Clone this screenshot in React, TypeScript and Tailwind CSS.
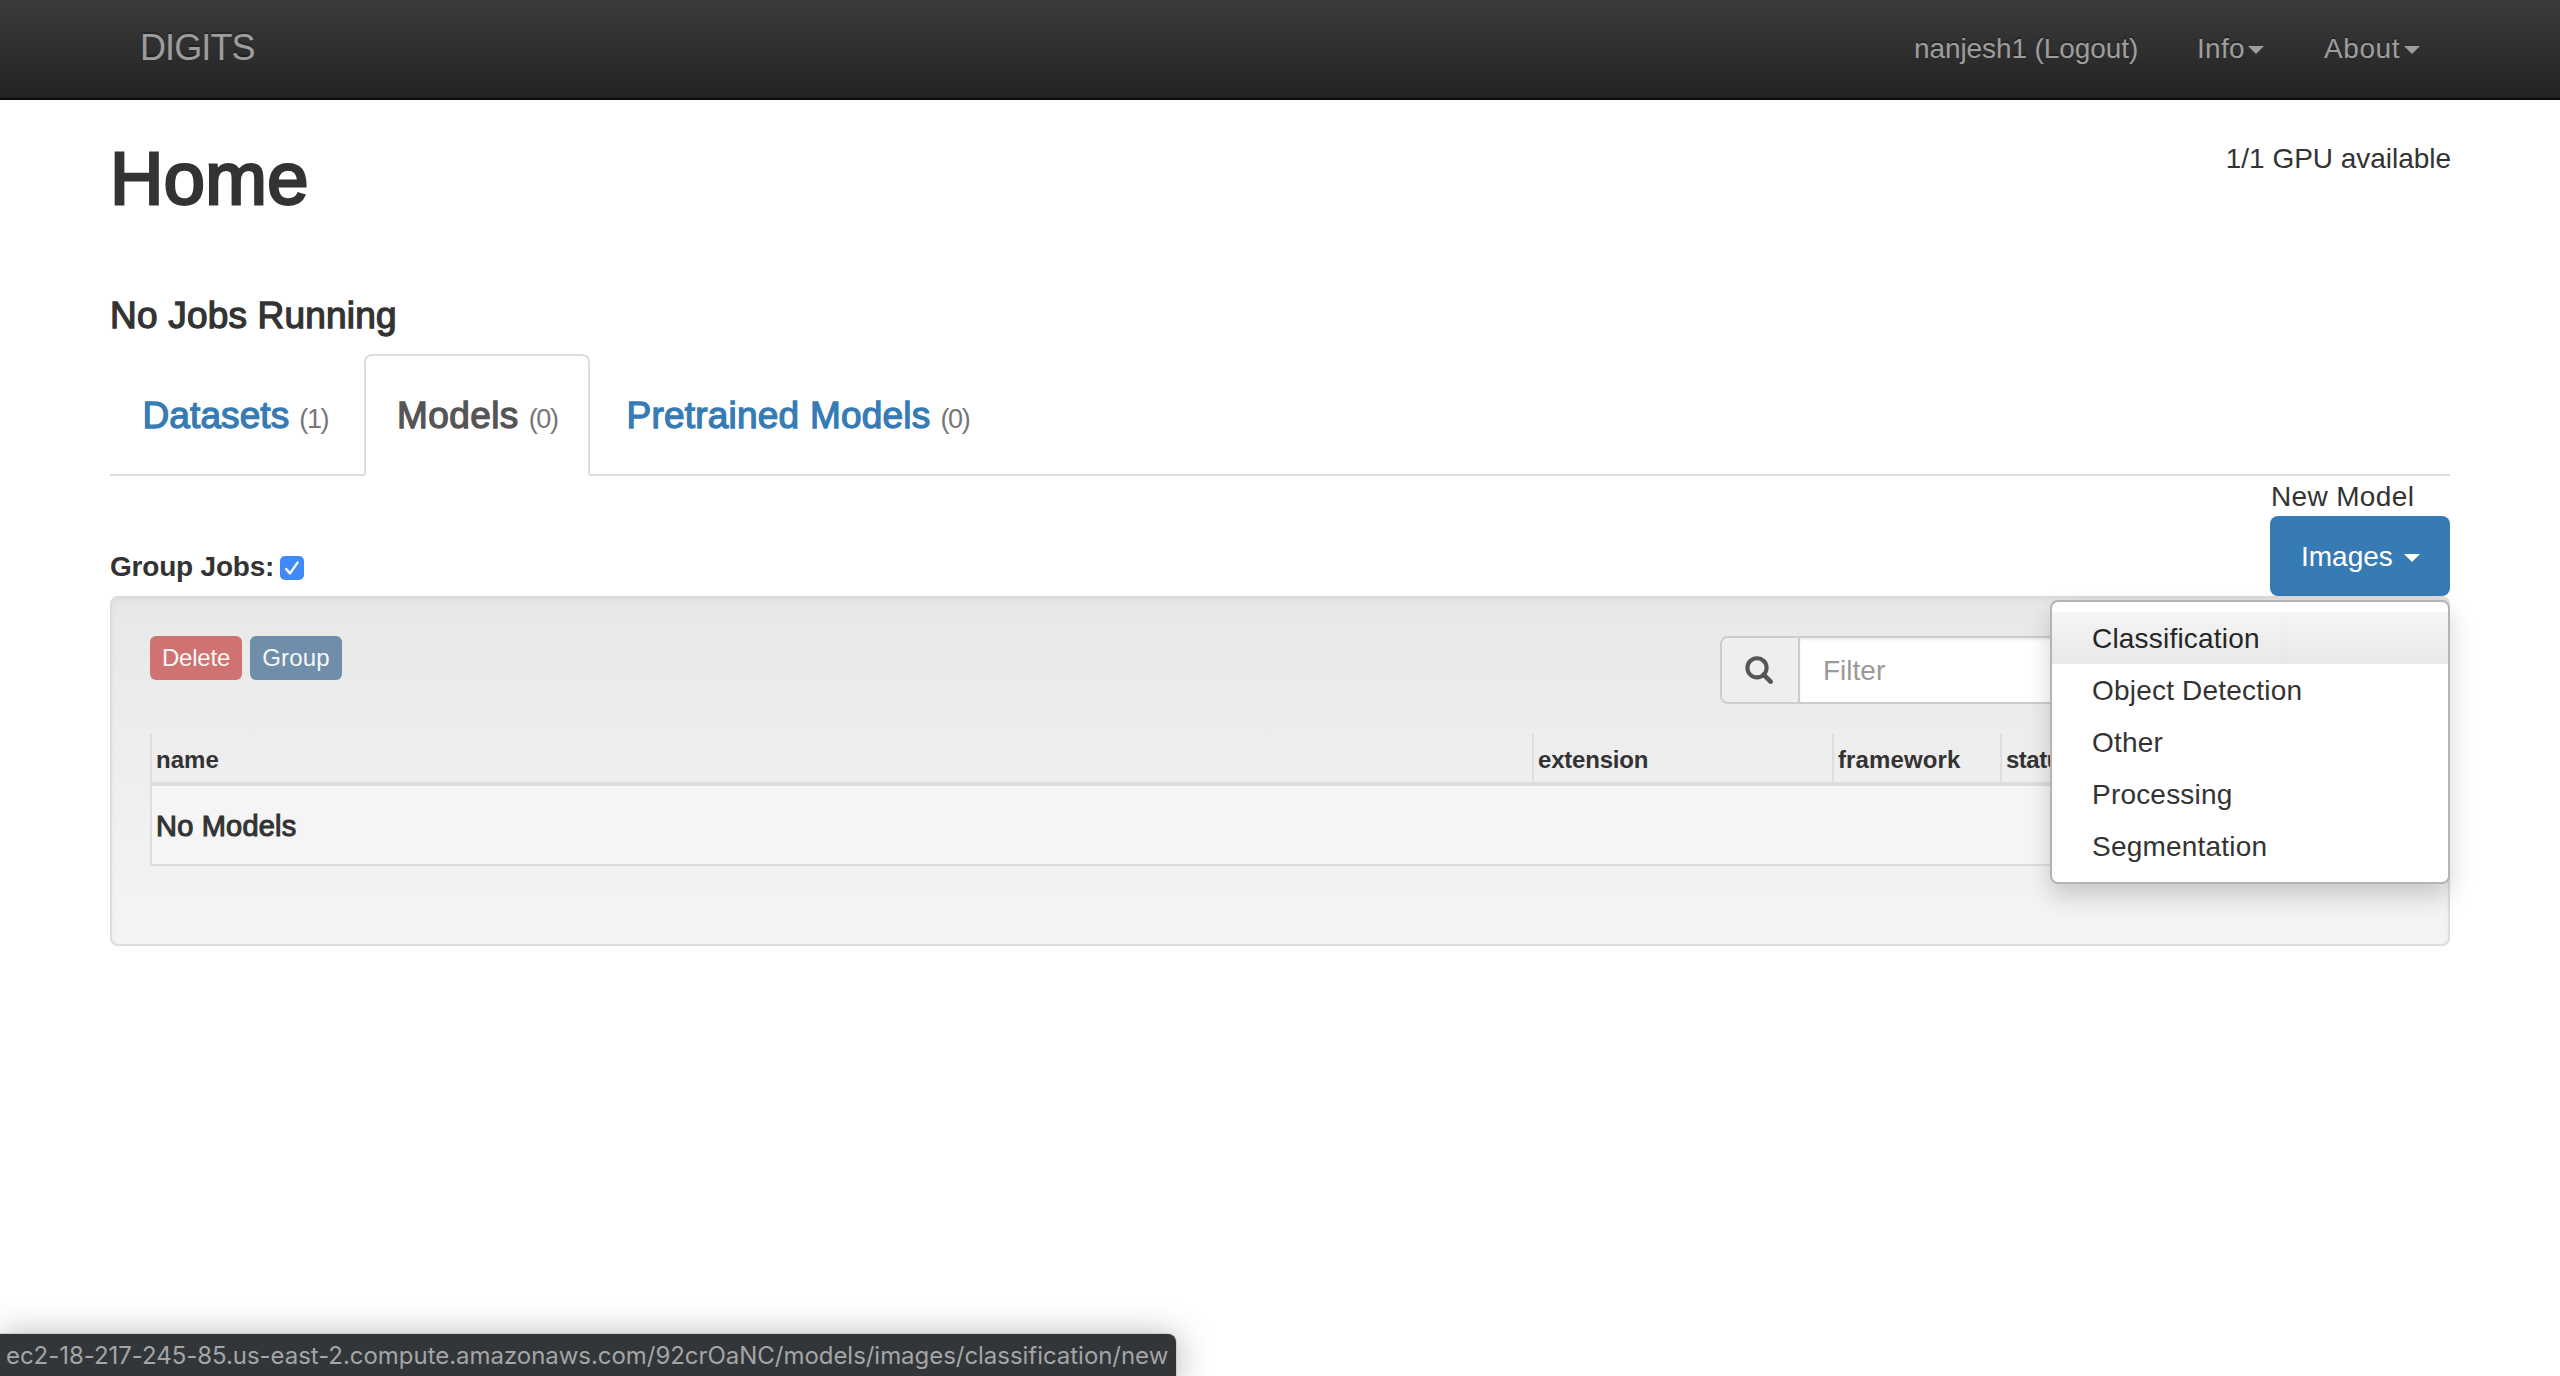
import React from 'react';

const medium = '[-webkit-text-stroke:1.3px_currentColor]';

function Caret() {
  return <span className="block h-0 w-0 border-x-8 border-t-8 border-x-transparent border-t-current" />;
}

function SearchIcon() {
  return (
    <svg viewBox="0 0 28 28" className="mr-0.5 h-7 w-7" fill="none" stroke="#555" strokeLinecap="round">
      <circle cx="12" cy="11.8" r="9.6" strokeWidth="4.1" />
      <path d="M18.6 18.6 25.6 25.6" strokeWidth="4.6" />
    </svg>
  );
}

function Navbar() {
  return (
    <nav className="flex h-[100px] items-start justify-between border-b-2 border-[#080808] bg-linear-to-b from-[#3c3c3c] to-[#222] pr-[140px] pl-[140px] leading-10 text-[#9d9d9d]">
      <a className="mt-7 text-[36px] tracking-[-0.9px] [text-shadow:0_-2px_0_rgba(0,0,0,0.25)]">DIGITS</a>
      <div className="mt-[29px] flex [text-shadow:0_-2px_0_rgba(0,0,0,0.25)]">
        <a className="w-[283px] tracking-[-0.09px]">nanjesh1 (Logout)</a>
        <a className="flex w-[127px] items-center">
          <span className="w-[51px] tracking-[0.3px]">Info</span>
          <span className="mt-0.5">
            <Caret />
          </span>
        </a>
        <a className="flex w-24 items-center">
          <span className="w-20 tracking-[0.6px]">About</span>
          <span className="mt-0.5">
            <Caret />
          </span>
        </a>
      </div>
    </nav>
  );
}

type TabProps = { label: string; count: number; active?: boolean; spacing: string };

function Tab({ label, count, active, spacing }: TabProps) {
  return (
    <a
      className={`mr-1 flex items-baseline gap-[10px] border-2 pt-10 leading-10 ${
        active
          ? '-mb-0.5 w-[226px] rounded-t-lg border-[#ddd] border-b-white bg-white pl-[31px] text-[#555]'
          : 'w-[250px] border-transparent pl-[30.5px] text-[#377bb5]'
      }`}
    >
      <span className={`text-[37px] whitespace-nowrap ${spacing} ${medium}`}>{label}</span>
      <span className="text-[27px] tracking-[-1.4px] text-[#777]">({count})</span>
    </a>
  );
}

const models = ['Classification', 'Object Detection', 'Other', 'Processing', 'Segmentation'];

function NewModelMenu() {
  return (
    <div className="w-[180px]">
      <div className="h-10 pl-px leading-[42px] tracking-[0.35px]">New Model</div>
      <div className="relative">
        <button className="flex h-20 w-full items-center rounded-lg bg-[#377bb5] pr-[30px] pl-[31px] leading-10 text-white">
          <span className="mt-0.5">Images</span>
          <span className="mt-[3px] ml-auto">
            <Caret />
          </span>
        </button>
        <ul className="absolute top-full right-0 z-10 mt-1 h-[284px] w-[400px] rounded-lg border-2 border-[#b4b4b4] bg-white py-[10px] shadow-[0_12px_24px_rgba(0,0,0,0.175)]">
          {models.map((name, i) => (
            <li
              key={name}
              className={`h-[52px] pl-10 leading-[54px] tracking-[0.2px] ${
                i === 0 ? 'bg-linear-to-b from-[#f5f5f5] to-[#e8e8e8] text-[#262626]' : ''
              }`}
            >
              {name}
            </li>
          ))}
        </ul>
      </div>
    </div>
  );
}

const columns = [
  { name: 'name', spacing: 'tracking-[0.05px]' },
  { name: 'extension', spacing: 'tracking-[-0.2px]' },
  { name: 'framework', spacing: 'tracking-[0.12px]' },
  { name: 'status', spacing: 'tracking-[-0.5px]' },
];

function ModelsPanel() {
  return (
    <section className="h-[350px] rounded-lg border-2 border-[#dcdcdc] bg-linear-to-b from-[#e8e8e8] to-[#f5f5f5] p-[38px] shadow-[inset_0_2px_6px_rgba(0,0,0,0.05)]">
      <div className="flex items-start">
        <div className="flex gap-2 text-center text-[24px] leading-[44px] text-[#f7f7f7] [text-shadow:0_-2px_0_rgba(0,0,0,0.1)]">
          <button className="h-11 w-[92px] rounded-md bg-[#cf7372] tracking-[-0.2px]">Delete</button>
          <button className="h-11 w-[92px] rounded-md bg-[#6e8ea9] tracking-[0.15px]">Group</button>
        </div>
        <div className="ml-auto flex h-[68px] w-[690px] rounded-lg border-2 border-[#ccc] bg-white">
          <span className="flex w-[78px] items-center justify-center rounded-l-md border-r-2 border-[#ccc] bg-[#eee]">
            <SearchIcon />
          </span>
          <span className="flex-1 rounded-r-md pl-[23px] leading-[66px] text-[#999] shadow-[inset_0_2px_2px_rgba(0,0,0,0.075)]">
            Filter
          </span>
        </div>
      </div>
      <div className="mt-[30px] border-l-2 border-[#ddd]">
        <div className="-ml-0.5 grid h-[52px] grid-cols-[1382px_300px_168px_1fr] border-b-4 border-[#ddd] text-[24px] leading-[51px] font-bold">
          {columns.map((c) => (
            <div key={c.name} className={`h-12 border-l-2 border-[#ddd] pl-1 ${c.spacing}`}>
              {c.name}
            </div>
          ))}
        </div>
        <div className="h-20 border-b-2 border-[#ddd] bg-[#f5f5f5] pl-1 text-[29px] leading-[80px]">
          <span className="tracking-[0.2px] [-webkit-text-stroke:1.1px_currentColor]">No Models</span>
        </div>
      </div>
    </section>
  );
}

export default function App() {
  return (
    <div className="flex h-[1376px] w-[2560px] flex-col overflow-hidden bg-white font-['Liberation_Sans',Arial,sans-serif] text-[28px] text-[#333]">
      <Navbar />
      <main className="px-[110px] pt-[39px]">
        <header className="flex items-start justify-between">
          <h1 className="text-[74px] leading-[80px] tracking-[0.3px] [-webkit-text-stroke:2.8px_currentColor]">Home</h1>
          <div className="-mr-px leading-10 tracking-[-0.03px]">1/1 GPU available</div>
        </header>
        <h3 className={`mt-[77px] text-[37px] leading-10 tracking-[0.2px] ${medium}`}>No Jobs Running</h3>
        <div className="mt-[18px] flex h-[122px] border-b-2 border-[#ddd]">
          <Tab label="Datasets" count={1} spacing="tracking-[0.1px]" />
          <Tab label="Models" count={0} active spacing="tracking-[0.4px]" />
          <Tab label="Pretrained Models" count={0} spacing="tracking-[0.22px]" />
        </div>
        <div className="flex justify-between">
          <label className="mt-[71px] flex gap-[6px] leading-10 font-bold tracking-[-0.2px]">
            Group Jobs:
            <span className="mt-[9px] h-6 w-6 rounded-[5px] bg-[#3f8af8]">
              <svg viewBox="0 0 24 24" className="h-6 w-6" fill="none" stroke="#fff" strokeWidth="2.4" strokeLinecap="round" strokeLinejoin="round">
                <path d="M6.2 13 10 17.4 17.6 6.6" />
              </svg>
            </span>
          </label>
          <NewModelMenu />
        </div>
        <ModelsPanel />
      </main>
      <footer className="mt-auto h-[42px] w-[1176px] rounded-tr-lg bg-[#323639] pl-1.5 font-[Inter,sans-serif] text-[24px] leading-[44px] tracking-[-0.04px] whitespace-nowrap text-[#a3a5a7] shadow-[0_0_0_1px_rgba(200,200,195,0.8),0_4px_36px_rgba(0,0,0,0.35)]">
        ec2-18-217-245-85.us-east-2.compute.amazonaws.com/92crOaNC/models/images/classification/new
      </footer>
    </div>
  );
}
